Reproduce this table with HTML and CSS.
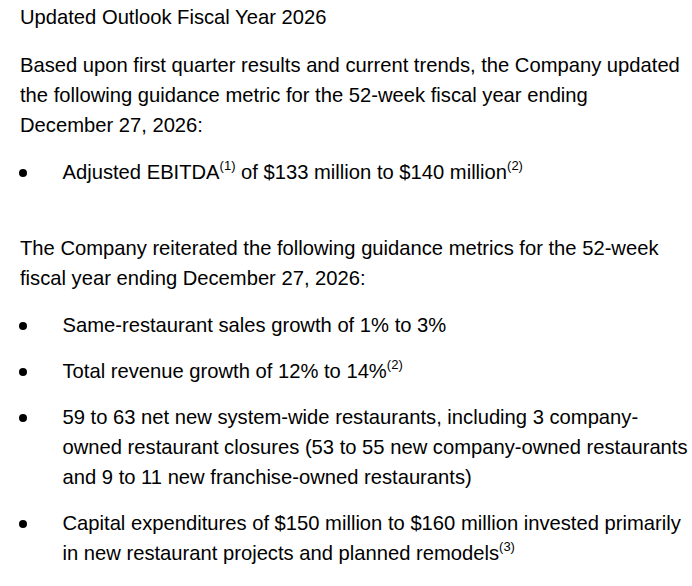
FILE: index.html
```html
<!DOCTYPE html>
<html>
<head>
<meta charset="utf-8">
<link rel="stylesheet" href="styles.css">
</head>
<body>
<div class="page">
  <p class="title">Updated Outlook Fiscal Year 2026</p>
  <p class="para para-narrow">Based upon first quarter results and current trends, the Company updated the following guidance metric for the 52-week fiscal year ending December 27, 2026:</p>
  <ul class="bullets bullets-updated">
    <li class="item"><span class="dot"></span><span class="text">Adjusted EBITDA<sup class="note">(1)</sup> of $133 million to $140 million<sup class="note">(2)</sup></span></li>
  </ul>
  <p class="para">The Company reiterated the following guidance metrics for the 52-week fiscal year ending December 27, 2026:</p>
  <ul class="bullets">
    <li class="item"><span class="dot"></span><span class="text">Same-restaurant sales growth of 1% to 3%</span></li>
    <li class="item"><span class="dot"></span><span class="text">Total revenue growth of 12% to 14%<sup class="note">(2)</sup></span></li>
    <li class="item"><span class="dot"></span><span class="text">59 to 63 net new system-wide restaurants, including 3 company-owned restaurant closures (53 to 55 new company-owned restaurants and 9 to 11 new franchise-owned restaurants)</span></li>
    <li class="item"><span class="dot"></span><span class="text">Capital expenditures of $150 million to $160 million invested primarily in new restaurant projects and planned remodels<sup class="note">(3)</sup></span></li>
  </ul>
</div>
</body>
</html>
```
FILE: styles.css
```css
html, body {
  margin: 0;
  padding: 0;
  background: #ffffff;
}
.page {
  padding: 2px 0 0 20px;
  font-family: "Liberation Sans", Arial, sans-serif;
  font-size: 20.2px;
  line-height: 30px;
  color: #000000;
}
.title {
  margin: 0 0 18px 0;
}
.para {
  margin: 0 0 17px 0;
}
.para-narrow {
  max-width: 664px;
}
.bullets {
  list-style: none;
  margin: 0;
  padding: 0;
  display: flex;
  flex-direction: column;
  gap: 16px;
}
.bullets-updated {
  margin-bottom: 46px;
}
.item {
  display: flex;
}
.dot {
  flex: 0 0 42.5px;
  display: flex;
  align-items: flex-start;
}
.dot::before {
  content: "";
  width: 8px;
  height: 8px;
  margin: 12px 0 0 -1.5px;
  border-radius: 50%;
  background: #000000;
}
.text {
  flex: 1;
}
.note {
  font-size: 13px;
  line-height: 0;
  vertical-align: 9px;
}
```
